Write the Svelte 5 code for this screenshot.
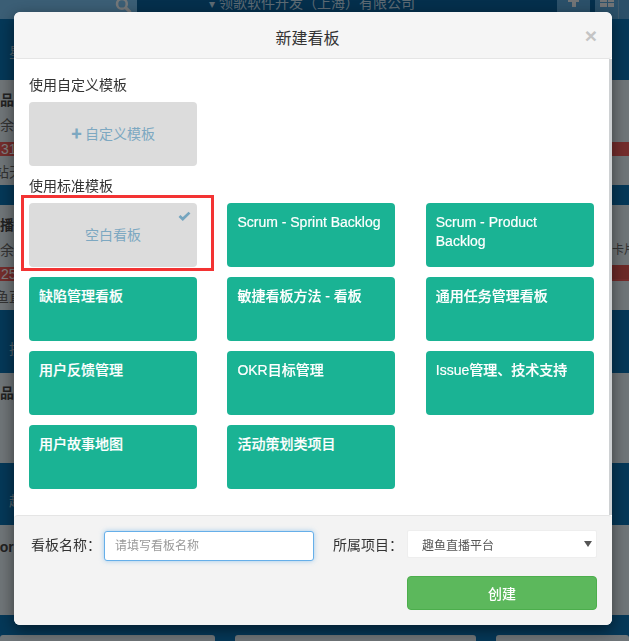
<script>
  const standard = [
    'Scrum - Sprint Backlog',
    'Scrum - Product Backlog',
    '缺陷管理看板',
    '敏捷看板方法 - 看板',
    '通用任务管理看板',
    '用户反馈管理',
    'OKR目标管理',
    'Issue管理、技术支持',
    '用户故事地图',
    '活动策划类项目',
  ];
</script>

<div class="page">
  <header class="topbar">
    <div class="search">
      <svg class="search-icon" viewBox="0 0 16 16" width="17" height="17">
        <circle cx="6.5" cy="6.5" r="4.6" fill="none" stroke="#e8eef2" stroke-width="2.4" />
        <path d="M10 10l4.5 4.5" stroke="#e8eef2" stroke-width="3" />
      </svg>
    </div>
    <div class="company"><span class="caret">▾</span> 领歌软件开发（上海）有限公司</div>
    <div class="tool"><span class="plus"></span></div>
    <div class="tool tool-grid"><span class="grid"></span></div>
    <div class="tool tool-more"></div>
  </header>

  <div class="band first"><span class="star">星</span></div>
  <section class="board tall">
    <b class="name">品牌</b>
    <span class="meta">余：1</span>
    <em>31</em>
    <span class="meta cut">站天</span>
  </section>
  <div class="band b20"></div>
  <section class="board tall">
    <b class="name">播放</b>
    <span class="meta">余：3</span>
    <em class="pct">25%</em>
    <span class="meta cut">鱼直</span>
    <div class="right-note">卡片</div>
    <i class="right-red"></i>
  </section>
  <div class="band b63"><span class="star low">技</span></div>
  <section class="board h90"><b class="name">品牌</b></section>
  <div class="band b62"><span class="star low2">起</span></div>
  <section class="board h90"><b class="name cut-latin">Priority</b></section>
  <div class="band b20"></div>
  <div class="cards-bottom"><i></i><i></i><i></i></div>
</div>

<div class="backdrop"></div>

<div class="modal">
  <div class="modal-head">
    <h4>新建看板</h4>
    <button class="close" type="button">×</button>
  </div>

  <div class="modal-body">
    <p class="group">使用自定义模板</p>
    <div class="grid-row">
      <div class="tpl blank"><span class="plus-sm">✚</span> 自定义模板</div>
    </div>
    <p class="group second-group">使用标准模板</p>
    <div class="grid-row">
      <div class="tpl blank selected">
        空白看板
        <svg class="check" viewBox="0 0 14 11" width="13" height="10">
          <path d="M1.5 5.5l3.6 3.4L12.5 1.8" fill="none" stroke="#75a5bf" stroke-width="3" />
        </svg>
      </div>
      {#each standard as name}
        <div class="tpl green">{name}</div>
      {/each}
    </div>
  </div>

  <div class="modal-foot">
    <label class="lbl" for="board-name">看板名称：</label>
    <input id="board-name" class="name-input" type="text" placeholder="请填写看板名称" />
    <label class="lbl lbl2" for="board-project">所属项目：</label>
    <div class="select-wrap">
      <select id="board-project"><option>趣鱼直播平台</option></select>
      <span class="arrow"></span>
    </div>
    <button class="create" type="button">创建</button>
  </div>
</div>

<style>
  :global(body) {
    margin: 0;
    overflow: hidden;
    font-family: "Liberation Sans", "Noto Sans CJK SC", sans-serif;
    background: #0a70b0;
  }

  .page {
    height: 641px;
    overflow: hidden;
    background: #0a70b0;
    color: #666;
    font-size: 14px;
  }

  .topbar {
    height: 19px;
    display: flex;
    background: #085e98;
    overflow: hidden;
  }

  .search {
    width: 137px;
    flex: none;
    background: #76bcea;
    display: flex;
    justify-content: flex-end;
    padding-right: 5px;
    box-sizing: border-box;
  }

  .search-icon {
    margin-top: -3px;
  }

  .company {
    flex: 1;
    padding-left: 72px;
    color: #b8d4e6;
    font-size: 14px;
    line-height: 14px;
    margin-top: -4px;
    white-space: nowrap;
  }

  .caret {
    font-size: 12px;
  }

  .tool {
    width: 33px;
    flex: none;
    background: #56a0d2;
    position: relative;
  }

  .tool-grid {
    width: 23px;
    margin-left: 5px;
  }

  .tool-more {
    width: 11px;
    border-left: 1px solid #7fb4d8;
    box-sizing: border-box;
  }

  .plus {
    position: absolute;
    left: 11px;
    top: -1px;
    width: 11px;
    height: 8px;
    background: linear-gradient(#e4e8ec, #e4e8ec) center top / 11px 3px no-repeat,
      linear-gradient(#e4e8ec, #e4e8ec) center / 4px 8px no-repeat;
  }

  .grid {
    position: absolute;
    left: 5px;
    top: 0;
    width: 14px;
    height: 7px;
    background: linear-gradient(#56a0d2, #56a0d2) center / 1px 7px no-repeat,
      linear-gradient(#56a0d2, #56a0d2) center 2px / 14px 1px no-repeat,
      #e4e8ec;
  }

  .band {
    background: #0a70b0;
    color: #a9c4d6;
    position: relative;
    font-size: 14px;
  }

  .first { height: 61px; }
  .b20 { height: 20px; }
  .b63 { height: 63px; }
  .b62 { height: 62px; }

  .star {
    position: absolute;
    left: 9px;
    top: 22px;
  }

  .low { top: 28px; }
  .low2 { top: 27px; }

  .board {
    position: relative;
    background: #dfeaf0;
    display: grid;
    justify-items: start;
    align-content: start;
    overflow: hidden;
    font-size: 14px;
  }

  .tall { height: 105px; }
  .h90 { height: 90px; }

  .name {
    color: #444;
    font-size: 14px;
    padding-top: 10px;
    line-height: 20px;
    white-space: nowrap;
  }

  .meta {
    line-height: 30px;
    white-space: nowrap;
  }

  .cut {
    line-height: 32px;
    margin-left: -5px;
  }

  .cut-latin {
    margin-left: -19px;
    padding-top: 12px;
  }

  .board em {
    font-style: normal;
    width: 100%;
    background: #e85a58;
    color: #fff;
    line-height: 14px;
    font-size: 14px;
    padding-left: 1px;
    box-sizing: border-box;
    margin: 2px 0 0;
  }

  .pct {
    margin-left: -2px;
  }

  .right-note {
    position: absolute;
    left: 612px;
    top: 38px;
    font-size: 12px;
    line-height: 14px;
    white-space: nowrap;
  }

  .right-red {
    position: absolute;
    left: 612px;
    right: 0;
    top: 60px;
    height: 14px;
    background: #d9534f;
  }

  .cards-bottom {
    display: grid;
    grid-template-columns: 215px 241px 1fr;
    gap: 20px;
    height: 10px;
  }

  .cards-bottom i {
    background: #dfeaf0;
    border-radius: 3px 3px 0 0;
  }

  .backdrop {
    position: fixed;
    inset: 0;
    background: rgba(0, 0, 0, 0.5);
  }

  .modal {
    position: fixed;
    left: 14px;
    top: 12px;
    width: 598px;
    height: 613px;
    display: flex;
    flex-direction: column;
    border-radius: 6px;
    overflow: hidden;
    background: #fff;
    box-shadow: 0 5px 15px rgba(0, 0, 0, 0.5);
  }

  .modal-head {
    position: relative;
    height: 47px;
    flex: none;
    background: #f5f5f5;
    border-bottom: 1px solid #e5e5e5;
    border-radius: 6px 6px 4px 4px;
    display: flex;
    align-items: center;
    justify-content: center;
    padding: 3px 11px 0 0;
    box-sizing: border-box;
  }

  h4 {
    margin: 0;
    font-size: 16px;
    font-weight: 400;
    color: #333;
  }

  .close {
    position: absolute;
    right: 15px;
    top: 13px;
    padding: 0;
    border: 0;
    background: none;
    color: #c4c4c4;
    font: 700 21px/1 "Liberation Sans", sans-serif;
  }

  .modal-body {
    flex: 1;
    min-height: 0;
    padding: 17px 15px 0;
    border-right: 3px solid #ced1d3;
    box-sizing: border-box;
  }

  .group {
    margin: 0 0 7px;
    font-size: 14px;
    line-height: 19px;
    color: #333;
  }

  .second-group {
    margin: 11px 0 7px;
  }

  .grid-row {
    display: grid;
    grid-template-columns: repeat(3, 168px);
    column-gap: 30.4px;
    row-gap: 10px;
  }

  .tpl {
    position: relative;
    height: 64px;
    box-sizing: border-box;
    border-radius: 4px;
  }

  .blank {
    background: #dcdcdc;
    color: #7da8c1;
    font-size: 14px;
    display: flex;
    align-items: center;
    justify-content: center;
    gap: 3px;
    padding-bottom: 2px;
  }

  .plus-sm {
    font-size: 11px;
  }

  .check {
    position: absolute;
    right: 6px;
    top: 8px;
  }

  .selected::after {
    content: "";
    position: absolute;
    left: -8px;
    top: -8px;
    width: 193px;
    height: 76px;
    border: 3px solid #f33333;
    box-sizing: border-box;
  }

  .green {
    background: #1ab394;
    color: #fff;
    font-size: 14px;
    font-weight: 500;
    line-height: 19px;
    padding: 10px 10px 0;
    -webkit-text-stroke: 0.2px #fff;
  }

  .modal-foot {
    height: 110px;
    flex: none;
    box-sizing: border-box;
    background: #f3f3f3;
    border-top: 1px solid #e5e5e5;
    border-radius: 4px 4px 0 0;
    padding: 15px 15px 0 17px;
    display: grid;
    grid-template-columns: 73px 210px 93px 190px;
    grid-template-rows: 30px 34px;
    row-gap: 15px;
    align-items: start;
    font-size: 14px;
    color: #333;
  }

  .lbl {
    line-height: 28px;
    white-space: nowrap;
  }

  .lbl2 {
    padding-left: 19px;
  }

  .name-input {
    width: 210px;
    height: 30px;
    box-sizing: border-box;
    border: 1px solid #66afe9;
    border-radius: 3px;
    padding: 0 10px;
    font: inherit;
    font-size: 12px;
    background: #fff;
    outline: 0;
    box-shadow: 0 0 5px rgba(102, 175, 233, 0.6);
  }

  .name-input::placeholder {
    color: #999;
  }

  .select-wrap {
    position: relative;
    margin-top: -1px;
  }

  select {
    appearance: none;
    width: 190px;
    height: 28px;
    box-sizing: border-box;
    border: 1px solid #eee;
    border-radius: 2px;
    background: #fff;
    padding: 3px 14px 0;
    font: inherit;
    font-size: 12px;
    color: #555;
  }

  .arrow {
    position: absolute;
    right: 5px;
    top: 11px;
    border-style: solid;
    border-width: 6px 4px 0;
    border-color: #555 transparent transparent;
  }

  .create {
    grid-column: 4;
    grid-row: 2;
    width: 190px;
    height: 34px;
    border: 1px solid #4cae4c;
    border-radius: 4px;
    background: #5cb85c;
    color: #fff;
    font: inherit;
    font-size: 14px;
    font-weight: 500;
  }
</style>
